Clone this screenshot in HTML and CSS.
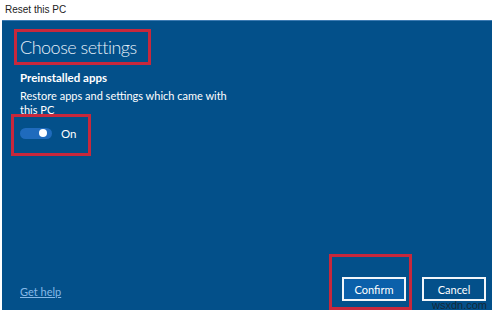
FILE: index.html
```html
<!DOCTYPE html>
<html>

<head>
  <title>Reset this PC</title>
  <link rel="stylesheet" href="styles.css">
</head>

<body>
  <div class="window-title">Reset this PC</div>
  <main class="panel">
    <div class="mark title-mark">
      <h1 class="page-title">Choose settings</h1>
    </div>
    <div class="setting-name">Preinstalled apps</div>
    <div class="setting-desc">Restore apps and settings which came with this PC</div>
    <div class="mark toggle-mark">
      <div class="toggle">
        <span class="knob"></span>
      </div>
      <span class="toggle-label">On</span>
    </div>
    <div class="footer">
      <a class="help-link" href="#">Get help</a>
      <div class="mark confirm-mark">
        <button class="btn btn-confirm">Confirm</button>
      </div>
      <button class="btn btn-cancel">Cancel</button>
    </div>
  </main>
  <div class="watermark">wsxdn.com</div>
</body>

</html>
```

FILE: styles.css
```css
body {
  margin: 0;
  background-color: white;
  font-family: Lato, "Open Sans", Arial, sans-serif;
  width: 494px;
  height: 313px;
  overflow: hidden;
  position: relative;
}

.window-title {
  height: 20px;
  line-height: 20px;
  padding-left: 5px;
  font-family: "Liberation Sans", Arial, sans-serif;
  font-size: 10px;
  color: #222;
}

.panel {
  margin: 0 2px;
  height: 290px;
  box-sizing: border-box;
  background-color: #03508a;
  border-top: 1px solid #3d7bb3;
  padding: 8px 6px 0 18px;
  display: flex;
  flex-direction: column;
  align-items: flex-start;
  color: white;
}

.mark {
  border: 3px solid #c8283c;
  box-sizing: border-box;
}

.title-mark {
  margin-left: -6px;
  width: 137px;
  height: 36px;
  padding-left: 3px;
}

.page-title {
  margin: 0;
  font-weight: 300;
  font-size: 18px;
  letter-spacing: -0.5px;
  line-height: 30px;
  color: #e6eff8;
  white-space: nowrap;
}

.setting-name {
  margin-top: 5px;
  font-size: 11.5px;
  font-weight: 700;
  line-height: 16px;
}

.setting-desc {
  margin-top: 3px;
  width: 215px;
  font-size: 11px;
  line-height: 14px;
}

.toggle-mark {
  margin-top: -3px;
  margin-left: -9px;
  width: 80px;
  height: 42px;
  display: flex;
  align-items: center;
  padding-left: 6px;
  padding-bottom: 4px;
  column-gap: 9px;
}

.toggle {
  width: 32px;
  height: 11px;
  border-radius: 6px;
  background-color: #1f6bbd;
  position: relative;
}

.knob {
  position: absolute;
  right: 5px;
  top: 1.5px;
  width: 8px;
  height: 8px;
  border-radius: 50%;
  background-color: white;
}

.toggle-label {
  font-size: 11.5px;
}

.footer {
  margin-top: auto;
  width: 100%;
  display: flex;
  align-items: flex-end;
}

.help-link {
  margin-right: auto;
  margin-bottom: 12px;
  font-size: 11px;
  color: #86b8e8;
}

.confirm-mark {
  width: 83px;
  height: 56px;
  padding: 20px 4px 6px 10px;
}

.btn {
  width: 64px;
  height: 24px;
  box-sizing: border-box;
  border: 2px solid #f2f6fa;
  color: white;
  font-family: Lato, "Open Sans", Arial, sans-serif;
  font-size: 11px;
  padding: 0;
}

.btn-confirm {
  background-color: #0b60aa;
}

.btn-cancel {
  margin-left: 10px;
  margin-bottom: 9px;
  background-color: #03508a;
}

.watermark {
  position: absolute;
  left: 432px;
  top: 299px;
  font-family: "Liberation Sans", Arial, sans-serif;
  font-size: 11px;
  color: #1a1a1a;
  opacity: 0.75;
}
```
